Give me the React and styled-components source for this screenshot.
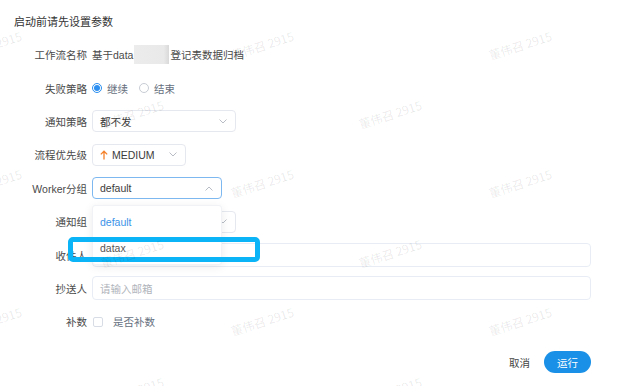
import React from "react";
import styled, { createGlobalStyle } from "styled-components";

const Global = createGlobalStyle`
  html, body { margin: 0; padding: 0; background: #fff; }
  body { font-family: "Liberation Sans", "Noto Sans CJK SC", sans-serif; }
`;

const Page = styled.div`
  position: relative;
  width: 642px;
  height: 386px;
  overflow: hidden;
  background: #fff;
  box-sizing: border-box;
  padding: 14px 51px 0 14px;
  display: flex;
  flex-direction: column;
  color: #4a4a4a;
`;

const Title = styled.div`
  font-size: 11px;
  line-height: 16px;
  color: #333;
`;

const Form = styled.div`
  margin-top: 8px;
  display: flex;
  flex-direction: column;
`;

const Row = styled.div`
  display: flex;
  align-items: center;
  height: 33.4px;
  gap: 5px;
`;

const Label = styled.div`
  width: 73px;
  text-align: right;
  font-size: 10.5px;
  color: #4a4a4a;
  white-space: nowrap;
`;

const Value = styled.div`
  font-size: 10.5px;
  color: #4a4a4a;
  display: flex;
  align-items: center;
`;

const Redact = styled.span`
  display: inline-block;
  width: 35px;
  height: 19px;
  margin: 0 1px;
  background: linear-gradient(90deg, #ececec 0%, #e9e9e9 85%, #d9d9d9 100%);
`;

const RadioGroup = styled.div`
  display: flex;
  align-items: center;
  font-size: 10.5px;
`;

const RadioItem = styled.label`
  display: flex;
  align-items: center;
  gap: 5px;
  margin-right: 11px;
  color: #66707e;
`;

const RadioDot = styled.span`
  width: 10px;
  height: 10px;
  border-radius: 50%;
  box-sizing: border-box;
  border: 1px solid ${(p) => (p.$on ? "#2a8ff0" : "#c8ccd4")};
  display: flex;
  align-items: center;
  justify-content: center;
  &::after {
    content: "";
    width: 6px;
    height: 6px;
    border-radius: 50%;
    background: ${(p) => (p.$on ? "#2a8ff0" : "transparent")};
  }
`;

const SelectWrap = styled.div`
  position: relative;
  width: ${(p) => p.$w}px;
`;

const SelectBox = styled.div`
  box-sizing: border-box;
  height: 22px;
  width: 100%;
  border: 1px solid ${(p) => (p.$focus ? "#7db8f0" : "#e5e8ee")};
  border-radius: 4px;
  display: flex;
  align-items: center;
  padding: 0 8px 0 7px;
  font-size: 10.5px;
  color: #3c3c3c;
  background: #fff;
`;

const SelectText = styled.span`
  flex: 1;
  display: flex;
  align-items: center;
  gap: 4px;
`;

const TextInput = styled.div`
  flex: 1;
  box-sizing: border-box;
  height: 24px;
  border: 1px solid #e8edf5;
  border-radius: 4px;
  display: flex;
  align-items: center;
  padding: 0 7px;
  font-size: 10.5px;
  color: #b0b4bb;
`;

const Check = styled.span`
  width: 10px;
  height: 10px;
  box-sizing: border-box;
  border: 1px solid #d8dde5;
  border-radius: 2px;
  margin-right: 5px;
  margin-left: 1px;
`;

const CheckText = styled.span`
  color: #66707e;
  font-size: 10.5px;
`;

const Dropdown = styled.div`
  position: absolute;
  left: 0;
  top: 28px;
  width: 100%;
  box-sizing: border-box;
  background: #fff;
  border: 1px solid #f0f2f5;
  border-radius: 3px;
  box-shadow: 0 2px 10px rgba(0, 0, 0, 0.08);
  padding: 3px 0;
  z-index: 2;
`;

const Option = styled.div`
  height: 26px;
  display: flex;
  align-items: center;
  padding: 0 7px;
  font-size: 10.5px;
  color: ${(p) => (p.$active ? "#3b93e8" : "#555")};
`;

const Footer = styled.div`
  margin-top: auto;
  margin-bottom: 13px;
  display: flex;
  justify-content: flex-end;
  align-items: center;
  gap: 14px;
`;

const TextButton = styled.span`
  font-size: 10.5px;
  color: #444;
`;

const PrimaryButton = styled.span`
  width: 47px;
  height: 22px;
  border-radius: 11px;
  background: #1a90e6;
  color: #fff;
  font-size: 10.5px;
  display: flex;
  align-items: center;
  justify-content: center;
`;

const Highlight = styled.div`
  position: absolute;
  left: 68px;
  top: 237px;
  width: 192px;
  height: 25px;
  box-sizing: border-box;
  border: 5px solid #0ab4f6;
  border-radius: 5px;
  z-index: 3;
`;

const Watermark = styled.div`
  position: absolute;
  font-size: 12px;
  color: rgba(0, 0, 0, 0.09);
  white-space: nowrap;
  transform: translate(-50%, -50%) rotate(-18deg);
  pointer-events: none;
  z-index: 4;
  font-family: "Noto Sans CJK SC", sans-serif;
`;

const Chevron = ({ up }) => (
  <svg width="8" height="5" viewBox="0 0 8 5">
    <path
      d={up ? "M0.5 4.5 L4 1 L7.5 4.5" : "M0.5 0.5 L4 4 L7.5 0.5"}
      fill="none"
      stroke="#b8bcc4"
      strokeWidth="1"
    />
  </svg>
);

const UpArrow = () => (
  <svg width="8" height="10" viewBox="0 0 8 10">
    <path d="M4 9.5 V1.2 M0.8 4.4 L4 1.2 L7.2 4.4" fill="none" stroke="#f5822a" strokeWidth="1.3" />
  </svg>
);

const marks = [
  [-10, 45], [262, 45], [520, 45],
  [132, 114], [390, 114],
  [-10, 183], [262, 183], [520, 183],
  [132, 253], [390, 253],
  [-10, 321], [262, 321], [520, 321],
  [132, 391], [390, 391],
];

export default function App() {
  return (
    <>
      <Global />
      <Page>
        <Title>启动前请先设置参数</Title>
        <Form>
          <Row>
            <Label>工作流名称</Label>
            <Value>
              基于data<Redact />登记表数据归档
            </Value>
          </Row>
          <Row>
            <Label>失败策略</Label>
            <RadioGroup>
              <RadioItem>
                <RadioDot $on />
                继续
              </RadioItem>
              <RadioItem>
                <RadioDot />
                结束
              </RadioItem>
            </RadioGroup>
          </Row>
          <Row>
            <Label>通知策略</Label>
            <SelectWrap $w={144}>
              <SelectBox>
                <SelectText>都不发</SelectText>
                <Chevron />
              </SelectBox>
            </SelectWrap>
          </Row>
          <Row>
            <Label>流程优先级</Label>
            <SelectWrap $w={94}>
              <SelectBox>
                <SelectText>
                  <UpArrow />
                  MEDIUM
                </SelectText>
                <Chevron />
              </SelectBox>
            </SelectWrap>
          </Row>
          <Row>
            <Label>Worker分组</Label>
            <SelectWrap $w={130}>
              <SelectBox $focus>
                <SelectText>default</SelectText>
                <Chevron up />
              </SelectBox>
              <Dropdown>
                <Option $active>default</Option>
                <Option>datax</Option>
              </Dropdown>
            </SelectWrap>
          </Row>
          <Row>
            <Label>通知组</Label>
            <SelectWrap $w={144}>
              <SelectBox>
                <SelectText />
                <Chevron />
              </SelectBox>
            </SelectWrap>
          </Row>
          <Row>
            <Label>收件人</Label>
            <TextInput />
          </Row>
          <Row>
            <Label>抄送人</Label>
            <TextInput>请输入邮箱</TextInput>
          </Row>
          <Row>
            <Label>补数</Label>
            <Check />
            <CheckText>是否补数</CheckText>
          </Row>
        </Form>
        <Footer>
          <TextButton>取消</TextButton>
          <PrimaryButton>运行</PrimaryButton>
        </Footer>
        <Highlight />
        {marks.map(([x, y], i) => (
          <Watermark key={i} style={{ left: x, top: y }}>
            董伟召 2915
          </Watermark>
        ))}
      </Page>
    </>
  );
}
